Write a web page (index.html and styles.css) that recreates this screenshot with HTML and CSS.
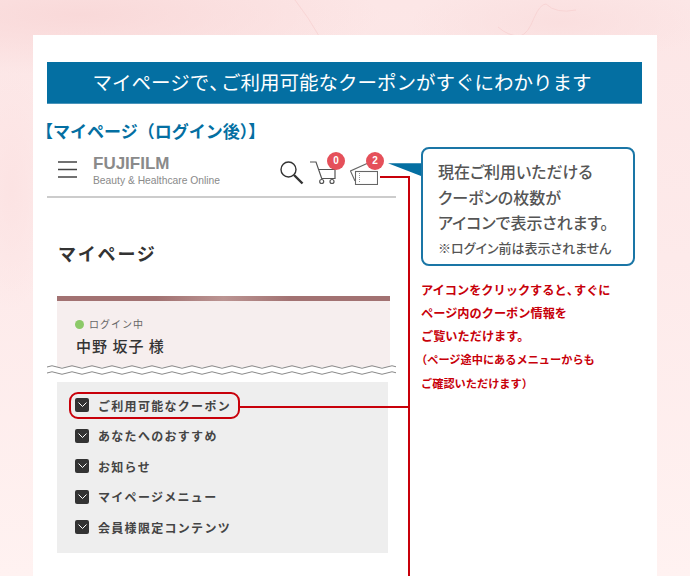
FILE: index.html
```html
<!DOCTYPE html>
<html lang="ja">
<head>
<meta charset="utf-8">
<title>マイページ</title>
<link rel="stylesheet" href="styles.css">
</head>
<body>
<svg class="veins" width="690" height="36" viewBox="0 0 690 36"><path d="M295 0q14 18 24 36M498 27q10 9 22 9 8-2 14-18 6-14 12-14 10 10 30 6" fill="none" stroke="#f6cfcf" stroke-width="1" opacity=".7"/></svg>
<main class="card">
  <h1 class="banner">マイページで<span class="tight">、</span>ご利用可能なクーポンがすぐにわかります</h1>
  <h2 class="section-title">【マイページ（ログイン後）】</h2>
  <div class="columns">
    <section class="phone">
      <header class="site-header">
        <svg class="menu-icon" width="19" height="17" viewBox="0 0 19 17"><path d="M0 1h19M0 8.500h19M0 16h19" fill="none" stroke="#444" stroke-width="1.400"/></svg>
        <div class="logo">
          <div class="logo-main">FUJIFILM</div>
          <div class="logo-sub">Beauty &amp; Healthcare Online</div>
        </div>
        <div class="header-icons">
          <svg class="search-icon" width="24" height="24" viewBox="0 0 24 24"><circle cx="8.500" cy="8.500" r="7.500" fill="none" stroke="#333" stroke-width="1.400"/><path d="M14 14l8.500 8.500" fill="none" stroke="#333" stroke-width="2.400"/></svg>
          <div class="icon-wrap cart">
            <svg width="27" height="24" viewBox="0 0 27 24"><path d="M0 1h6l5.700 16.500H25V8.500H8.500" fill="none" stroke="#555" stroke-width="1.200"/><circle cx="11.700" cy="20.500" r="2" fill="none" stroke="#555" stroke-width="1.200"/><circle cx="22" cy="20.500" r="2" fill="none" stroke="#555" stroke-width="1.200"/></svg>
            <span class="badge">0</span>
          </div>
          <div class="icon-wrap coupon">
            <svg width="28" height="22" viewBox="0 0 28 22"><path d="M5 18L.5 8 17 .5" fill="none" stroke="#666" stroke-width="1.100"/><rect x="5.500" y="8.500" width="22" height="13" fill="#fff" stroke="#666" stroke-width="1.100"/><path d="M9.500 10v10" fill="none" stroke="#999" stroke-width="1" stroke-dasharray="1 1"/></svg>
            <span class="badge">2</span>
          </div>
        </div>
      </header>
      <h3 class="page-title">マイページ</h3>
      <div class="user-box">
        <div class="status"><i class="dot"></i>ログイン中</div>
        <div class="user-name">中野 坂子 様</div>
      </div>
      <svg class="wave" width="349" height="12" viewBox="0 0 349 12">
        <defs><pattern id="w" width="20" height="12" patternUnits="userSpaceOnUse"><path d="M0 3q5-2.500 10 0t10 0M0 9q5-2.500 10 0t10 0" fill="none" stroke="#888" stroke-width="1"/></pattern></defs>
        <rect width="349" height="12" fill="url(#w)"/>
      </svg>
      <ul class="menu">
        <li class="menu-item is-marked"><span class="check"><svg width="9" height="6" viewBox="0 0 9 6"><path d="M.5.5L4.500 4.500 8.500.5" fill="none" stroke="#fff" stroke-width="1"/></svg></span>ご利用可能なクーポン</li>
        <li class="menu-item"><span class="check"><svg width="9" height="6" viewBox="0 0 9 6"><path d="M.5.5L4.500 4.500 8.500.5" fill="none" stroke="#fff" stroke-width="1"/></svg></span>あなたへのおすすめ</li>
        <li class="menu-item"><span class="check"><svg width="9" height="6" viewBox="0 0 9 6"><path d="M.5.5L4.500 4.500 8.500.5" fill="none" stroke="#fff" stroke-width="1"/></svg></span>お知らせ</li>
        <li class="menu-item"><span class="check"><svg width="9" height="6" viewBox="0 0 9 6"><path d="M.5.5L4.500 4.500 8.500.5" fill="none" stroke="#fff" stroke-width="1"/></svg></span>マイページメニュー</li>
        <li class="menu-item"><span class="check"><svg width="9" height="6" viewBox="0 0 9 6"><path d="M.5.5L4.500 4.500 8.500.5" fill="none" stroke="#fff" stroke-width="1"/></svg></span>会員様限定コンテンツ</li>
      </ul>
    </section>
    <aside class="notes">
      <div class="callout">
        <p class="callout-line">現在ご利用いただける</p>
        <p class="callout-line">クーポンの枚数が</p>
        <p class="callout-line">アイコンで表示されます。</p>
        <p class="callout-small">※ログイン前は表示されません</p>
      </div>
      <div class="red-note">
        <p class="red-line">アイコンをクリックすると<span class="tight">、</span>すぐに</p>
        <p class="red-line">ページ内のクーポン情報を</p>
        <p class="red-line">ご覧いただけます。</p>
        <p class="red-small red-open">（ページ途中にあるメニューからも</p>
        <p class="red-small">ご確認いただけます）</p>
      </div>
    </aside>
  </div>
  <i class="pointer"></i>
  <i class="line line-top"></i>
  <i class="line line-vertical"></i>
  <i class="line line-menu"></i>
</main>
</body>
</html>
```
FILE: styles.css
```css
* { box-sizing: border-box; }
html, body { margin: 0; padding: 0; }
body {
  position: relative;
  width: 690px;
  height: 576px;
  overflow: hidden;
  font-family: "Noto Sans CJK JP", "Noto Sans", sans-serif;
  background-color: #feeeee;
  background-image:
    radial-gradient(ellipse 300px 60px at 80px 15px, #f9d9d9 0%, rgba(249,217,217,0) 100%),
    radial-gradient(ellipse 150px 40px at 560px 22px, #fadfdf 0%, rgba(250,223,223,0) 100%),
    radial-gradient(ellipse 40px 120px at 12px 190px, #fce3e3 0%, rgba(252,227,227,0) 100%),
    linear-gradient(180deg, #fce6e6 0%, #fdeaea 45%, #fff2f1 100%);
}
.veins { position: absolute; left: 0; top: 0; }
p, h1, h2, h3, ul { margin: 0; padding: 0; }
.card {
  position: relative;
  width: 624px;
  height: 541px;
  margin: 35px 0 0 33px;
  padding: 27px 15px 0 14px;
  background: #fff;
}
.banner {
  height: 42px;
  padding-right: 5px;
  background: #046fa2;
  border-bottom: 1px solid #4a94ba;
  color: #fff;
  font-size: 19.500px;
  font-weight: 400;
  line-height: 40px;
  text-align: center;
  white-space: nowrap;
}
.tight { letter-spacing: -.5em; margin-right: .1em; }
.section-title {
  margin: 15px 0 0 -11px;
  color: #046fa2;
  font-size: 17px;
  font-weight: 700;
  line-height: 24px;
  white-space: nowrap;
}
.columns { display: flex; }
.phone { width: 349px; flex: none; }
.site-header {
  display: flex;
  align-items: center;
  height: 55px;
  padding: 0 0 0 11px;
  border-bottom: 2px solid #ccc;
}
.menu-icon { flex: none; }
.logo { margin: 3px 0 0 16px; color: #8a8a8a; width: 127px; flex: none; }
.logo-main {
  font-family: "Liberation Sans", sans-serif;
  font-size: 17px;
  font-weight: 700;
  line-height: 17px;
}
.logo-sub {
  font-family: "Liberation Sans", sans-serif;
  font-size: 10.300px;
  line-height: 13px;
  margin-top: 2px;
  white-space: nowrap;
}
.header-icons { display: flex; align-items: flex-end; margin-left: 60px; height: 36px; padding-bottom: 3px; }
.search-icon { flex: none; }
.icon-wrap { position: relative; }
.icon-wrap svg { display: block; }
.cart { margin-left: 6px; }
.coupon { margin-left: 13px; }
.badge {
  position: absolute;
  width: 18px;
  height: 18px;
  border-radius: 50%;
  background: #e5505a;
  color: #fff;
  font-family: "Liberation Sans", sans-serif;
  font-size: 10px;
  font-weight: 700;
  line-height: 18px;
  text-align: center;
}
.cart .badge { top: -9px; left: 17px; }
.coupon .badge { top: -11px; left: 16px; }
.page-title {
  margin: 43px 0 0 11px;
  color: #333;
  font-size: 18px;
  font-weight: 700;
  line-height: 24px;
  letter-spacing: 1.800px;
}
.user-box {
  width: 333px;
  height: 71px;
  margin: 31px 0 0 10px;
  padding: 16px 0 0 18px;
  border-top: 5px solid #a27272;
  border-image: linear-gradient(90deg, #a27272 0%, #a27272 30%, #bb9492 50%, #a27272 70%, #a27272 100%) 1;
  background: #f6eeee;
}
.status {
  display: flex;
  align-items: center;
  color: #666;
  font-size: 10px;
  line-height: 14px;
  letter-spacing: 1px;
}
.dot {
  width: 9px;
  height: 9px;
  margin-right: 5px;
  border-radius: 50%;
  background: #8cc968;
}
.user-name {
  margin: 4px 0 0 1px;
  color: #333;
  font-size: 15px;
  font-weight: 500;
  line-height: 22px;
  letter-spacing: 1px;
}
.wave { display: block; margin-top: -3px; position: relative; }
.menu {
  width: 331px;
  height: 171px;
  margin: 6px 0 0 10px;
  padding: 8px 0 0 18px;
  background: #eee;
  list-style: none;
}
.menu-item {
  display: flex;
  align-items: center;
  height: 30.500px;
  color: #444;
  font-size: 12px;
  font-weight: 700;
  letter-spacing: 1.300px;
  white-space: nowrap;
}
.is-marked { position: relative; }
.is-marked::before {
  content: "";
  position: absolute;
  left: -6px;
  top: 2px;
  box-sizing: border-box;
  width: 171px;
  height: 27px;
  border: 2px solid #c8000a;
  border-radius: 9px;
}
.check {
  display: flex;
  align-items: center;
  justify-content: center;
  width: 14px;
  height: 14px;
  margin-right: 9px;
  border-radius: 2px;
  background: #333;
}
.check svg { display: block; }
.notes { margin-left: 25px; width: 220px; }
.callout {
  width: 214px;
  height: 119px;
  margin-top: 4px;
  padding: 10px 0 0 15px;
  border: 2px solid #1a76a6;
  border-radius: 8px;
  color: #555;
  background: #fff;
  font-feature-settings: "palt";
}
.callout-line { font-size: 16px; font-weight: 500; line-height: 25.500px; white-space: nowrap; }
.callout-small { margin-top: 1px; font-size: 13px; font-weight: 500; line-height: 22px; white-space: nowrap; }
.red-note { margin-top: 13px; color: #c8000a; }
.red-line { font-size: 12.200px; font-weight: 700; line-height: 23px; white-space: nowrap; }
.red-small { font-size: 11.200px; font-weight: 700; line-height: 24px; white-space: nowrap; }
.red-open { margin: -1px 0 0 -5px; }
.pointer {
  position: absolute;
  left: 355px;
  top: 126px;
  width: 33px;
  height: 15px;
  background: #046fa2;
  clip-path: polygon(0 15%, 100% 15%, 100% 100%);
}
.line { position: absolute; background: #c8000a; }
.line-top { left: 347px; top: 141px; width: 29px; height: 2px; }
.line-vertical { left: 375px; top: 141px; width: 2px; height: 400px; }
.line-menu { left: 207px; top: 371px; width: 168px; height: 2px; }
```
